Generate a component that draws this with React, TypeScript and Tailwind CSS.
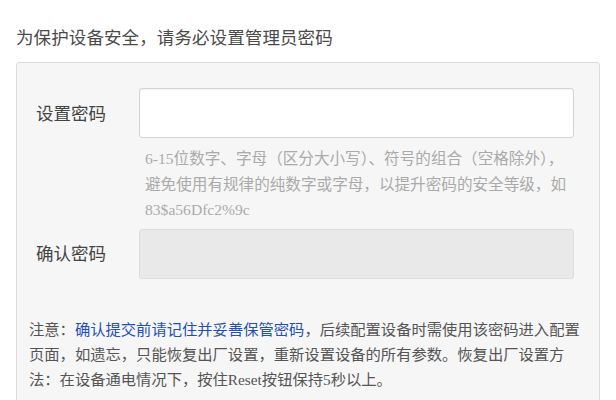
import React from 'react';

const App: React.FC = () => {
  return (
    <div
      className="w-[616px] h-[400px] overflow-hidden bg-white px-4 pt-[25px]"
      style={{ fontFamily: '"Noto Sans CJK SC", "Noto Sans", sans-serif' }}
    >
      {/* Heading */}
      <p className="text-[17.5px] leading-6 text-[#4a4a4a] tracking-[0.1px]">为保护设备安全，请务必设置管理员密码</p>

      {/* Form panel */}
      <div className="mt-[13px] w-[584px] h-[360px] border border-[#dcdcdc] rounded-[3px] bg-[#f6f6f6] pt-[25px] pr-[25px]">
        <div className="flex items-center">
          <label className="w-[122px] pl-[19px] text-[17.5px] text-[#444]">设置密码</label>
          <input
            type="password"
            className="w-[436px] h-[50px] border border-[#d4d4d4] rounded-[3px] bg-white shadow-[inset_0_1px_2px_rgba(0,0,0,0.06)] outline-none"
          />
        </div>

        {/* Hint */}
        <div
          className="ml-[128px] mt-[8px] whitespace-nowrap text-[15.6px] leading-[25.5px] text-[#aaa]"
          style={{ fontFamily: '"Liberation Serif", "Noto Sans CJK SC", serif' }}
        >
          6-15位数字、字母（区分大小写）、符号的组合（空格除外），
          <br />
          避免使用有规律的纯数字或字母，以提升密码的安全等级，如
          <br />
          83$a56Dfc2%9c
        </div>

        <div className="flex items-center mt-[6px]">
          <label className="w-[122px] pl-[19px] text-[17.5px] text-[#444]">确认密码</label>
          <input
            type="password"
            disabled
            className="w-[436px] h-[50px] border border-[#dcdcdc] rounded-[3px] bg-[#e9e9e9] outline-none"
          />
        </div>

        {/* Note */}
        <p
          className="ml-[12px] mt-[38px] whitespace-nowrap text-[15.3px] leading-[25px] text-[#555]"
          style={{ fontFamily: '"Liberation Serif", "Noto Sans CJK SC", serif' }}
        >
          注意：<span className="text-[#1f4fb8]">确认提交前请记住并妥善保管密码</span>，后续配置设备时需使用该密码进入配置
          <br />
          页面，如遗忘，只能恢复出厂设置，重新设置设备的所有参数。恢复出厂设置方
          <br />
          法：在设备通电情况下，按住Reset按钮保持5秒以上。
        </p>
      </div>
    </div>
  );
};

export default App;
